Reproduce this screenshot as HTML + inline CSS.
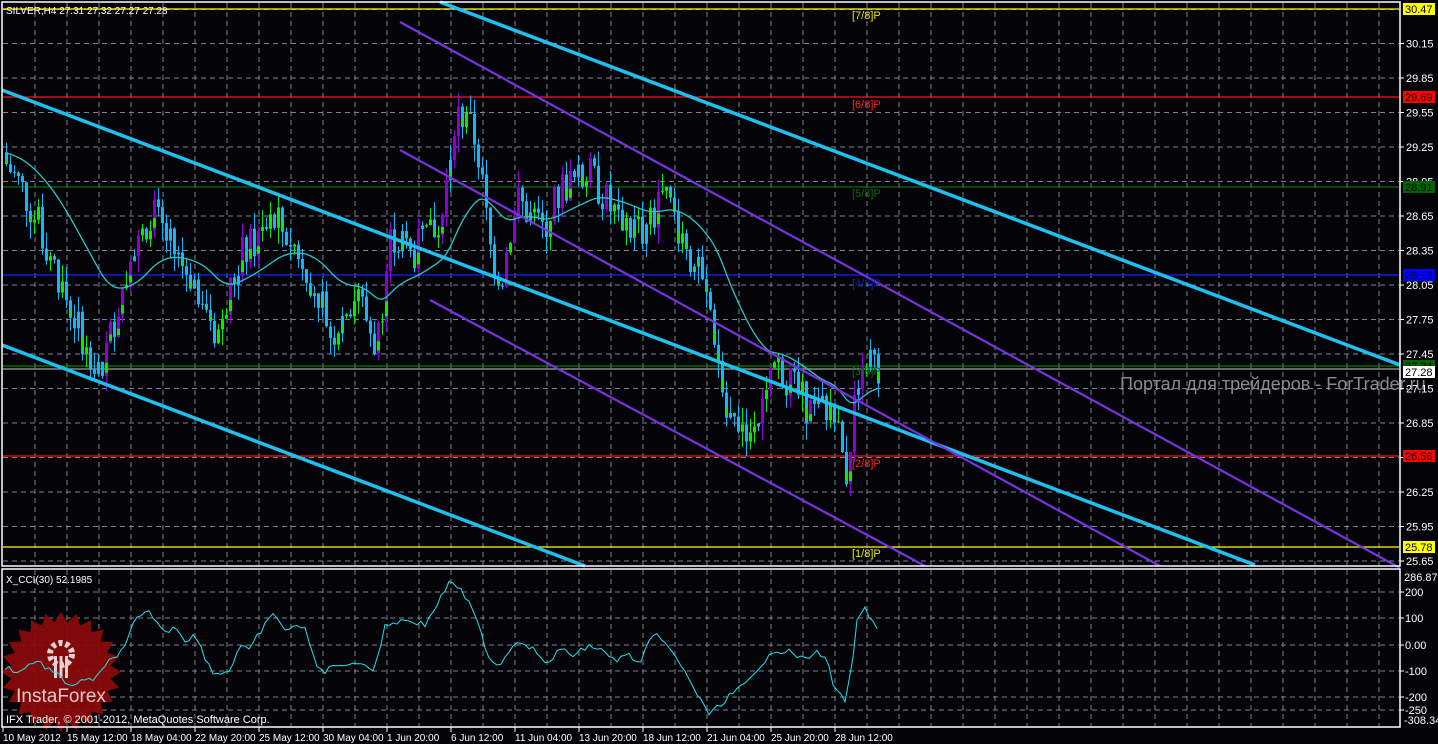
<!DOCTYPE html>
<html><head><meta charset="utf-8"><style>
html,body{margin:0;padding:0;background:#000;}
body{width:1438px;height:744px;overflow:hidden;position:relative;font-family:"Liberation Sans","DejaVu Sans",sans-serif;}
svg{position:absolute;left:0;top:0;}
text{font-family:"Liberation Sans","DejaVu Sans",sans-serif;}
</style></head><body>
<svg id="s" width="1438" height="744" viewBox="0 0 1438 744" xmlns="http://www.w3.org/2000/svg">
<rect width="1438" height="744" fill="#040408"/>
<g id="grid" stroke="#7a8590" stroke-width="1" stroke-dasharray="5,4"></g>
<g id="hl"></g>
<g id="candles"></g>
<polyline id="ma" fill="none" stroke="#28c8c8" stroke-width="1.3"/>
<g stroke="#1ec0f0" stroke-width="3.5" stroke-linecap="butt">
<line x1="440" y1="2" x2="1400" y2="365"/>
<line x1="2" y1="90" x2="1255" y2="565"/>
<line x1="2" y1="345" x2="585" y2="566"/>
</g>
<g stroke="#7a32e0" stroke-width="2.2">
<line x1="400" y1="22" x2="1400" y2="568"/>
<line x1="400" y1="150" x2="1160" y2="566"/>
<line x1="430" y1="300" x2="925" y2="566"/>
</g>
<g font-size="11">
<text x="852" y="19" fill="#e8e800">[7/8]P</text>
<text x="852" y="108" fill="#ff2020">[6/8]P</text>
<text x="852" y="197" fill="#0a6a0a">[5/8]P</text>
<text x="852" y="287" fill="#1020c0">[4/8]P</text>
<text x="852" y="375" fill="#0a6a0a">[3/8]P</text>
<text x="852" y="467" fill="#ff2020">[2/8]P</text>
<text x="852" y="557" fill="#e8e800">[1/8]P</text>
</g>
<text x="1120" y="390" font-size="18" fill="#8a8a8a">Портал для трейдеров - ForTrader.ru</text>
<text x="6" y="14" font-size="10" fill="#fff">SILVER,H4  27.31 27.32 27.27 27.28</text>
<g transform="translate(61,672)">
<polygon id="star" fill="#8c0a0a" opacity="0.92"/>
<g fill="#e8d0d0">
<circle cx="0" cy="-18" r="11" fill="none" stroke="#e8d0d0" stroke-width="6" stroke-dasharray="4,3"/>
<rect x="-7" y="-16" width="3" height="22"/><rect x="-1.5" y="-16" width="3" height="22"/><rect x="4" y="-16" width="3" height="22"/>
</g>
<text x="0" y="30" font-size="19" fill="#e8c8c8" text-anchor="middle">InstaForex</text>
</g>
<polyline id="cci" fill="none" stroke="#20e0f0" stroke-width="1"/>
<text x="6" y="583" font-size="10" fill="#fff">X_CCI(30) 52.1985</text>
<text x="6" y="723" font-size="11" fill="#fff">IFX Trader, © 2001-2012, MetaQuotes Software Corp.</text>
<g fill="none" stroke="#fff" stroke-width="1.5">
<rect x="2" y="2" width="1398" height="564"/>
<rect x="2" y="569" width="1398" height="158"/>
</g>
<g id="axis" font-size="11" fill="#fff"></g>
<g id="time" font-size="10" fill="#fff"></g>
</svg>
<script>
var NS="http://www.w3.org/2000/svg";
function el(p,t,a,txt){var e=document.createElementNS(NS,t);for(var k in a)e.setAttribute(k,a[k]);if(txt!=null)e.textContent=txt;document.getElementById(p).appendChild(e);return e;}
function Y(p){return 43+(30.15-p)*115;}
for(var x=35;x<1400;x+=32){el('grid','line',{x1:x,y1:3,x2:x,y2:565});el('grid','line',{x1:x,y1:570,x2:x,y2:726});}
var gy=[9.5];for(var k=0;k<16;k++)gy.push(43.5+34.5*k);
gy.forEach(function(y){if(y<565)el('grid','line',{x1:3,y1:y,x2:1399,y2:y});});
[592,618,645,671,697,710].forEach(function(y){el('grid','line',{x1:3,y1:y,x2:1399,y2:y});});
[[9,'#ffff00'],[97,'#ff1010'],[187,'#0a6a0a'],[275,'#1020ff'],[366,'#0a7a0a'],[369,'#a0a0a0'],[456,'#ff1010'],[547,'#ffff00']].forEach(function(a){el('hl','line',{x1:3,y1:a[0],x2:1399,y2:a[0],stroke:a[1],'stroke-width':1.2});});
var labs=['30.15','29.85','29.55','29.25','28.95','28.65','28.35','28.05','27.75','27.45','27.15','26.85','26.55','26.25','25.95','25.65'];
labs.forEach(function(l,i){var y=43.5+34.5*i;el('axis','line',{x1:1400,y1:y,x2:1404,y2:y,stroke:'#fff'});el('axis','text',{x:1406,y:y+4},l);});
[[9,'30.47','#ffff00','#000'],[97,'29.69','#ff0000','#000'],[187,'28.91','#006400','#000'],[275,'28.13','#0000ff','#000030'],[366,'27.34','#006400','#000'],[372,'27.28','#fff','#000'],[456,'26.56','#ff0000','#000'],[547,'25.78','#ffff00','#000']].forEach(function(a){el('axis','rect',{x:1403,y:a[0]-6,width:32,height:12,fill:a[2]});el('axis','text',{x:1405,y:a[0]+4,fill:a[3]},a[1]);});
[[592,'200'],[618,'100'],[645,'0.00'],[671,'-100'],[697,'-200'],[710,'-250']].forEach(function(a){el('axis','line',{x1:1400,y1:a[0],x2:1404,y2:a[0],stroke:'#fff'});el('axis','text',{x:1405,y:a[0]+4},a[1]);});
el('axis','text',{x:1404,y:581},'286.870');el('axis','text',{x:1404,y:724},'-308.345');
var tl=['10 May 2012','15 May 12:00','18 May 04:00','22 May 20:00','25 May 12:00','30 May 04:00','1 Jun 20:00','6 Jun 12:00','11 Jun 04:00','13 Jun 20:00','18 Jun 12:00','21 Jun 04:00','25 Jun 20:00','28 Jun 12:00'];
tl.forEach(function(t,i){var x=3+64*i;el('time','line',{x1:x,y1:727,x2:x,y2:732,stroke:'#fff'});el('time','text',{x:x,y:741},t);});
var P=[[5,29.1],[20,28.9],[45,28.4],[75,27.7],[100,27.3],[120,28.0],[150,28.7],[175,28.3],[200,28.0],[215,27.6],[240,28.3],[275,28.6],[300,28.3],[320,27.9],[330,27.6],[355,28.0],[375,27.5],[390,28.5],[410,28.3],[440,28.6],[455,29.6],[475,29.3],[490,28.3],[500,28.1],[515,28.8],[540,28.5],[560,28.9],[590,29.0],[610,28.7],[640,28.5],[665,28.8],[690,28.3],[710,27.8],[725,26.9],[750,26.8],[765,27.0],[775,27.4],[795,27.1],[815,26.9],[830,27.0],[845,26.4],[860,27.5],[870,27.4],[878,27.3]];
function interp(A,x){for(var i=0;i<A.length-1;i++){if(x<=A[i+1][0]){var t=(x-A[i][0])/(A[i+1][0]-A[i][0]);return A[i][1]+t*(A[i+1][1]-A[i][1]);}}return A[A.length-1][1];}
var seed=7;function rnd(){seed=(seed*9301+49297)%233280;return seed/233280;}
var prev=29.2,ema=29.2,mapts=[];
for(var x=5;x<=878;x+=4){
 var c=interp(P,x)+(rnd()-0.5)*0.34,o=prev;
 var hi=Math.max(o,c)+rnd()*0.15,lo=Math.min(o,c)-rnd()*0.15;
 var col=c<o?'#10b8f8':(c-o>0.18?'#8c00d8':(rnd()<0.6?'#00f000':'#10b8f8'));
 el('candles','line',{x1:x+1.5,y1:Y(hi),x2:x+1.5,y2:Y(lo),stroke:col,'stroke-width':1});
 var yt=Y(Math.max(o,c)),yb=Y(Math.min(o,c));
 el('candles','rect',{x:x,y:yt,width:3,height:Math.max(1,yb-yt),fill:col});
 if(rnd()<0.35)el('candles','rect',{x:x,y:yt+(yb-yt)*0.6,width:3,height:(yb-yt)*0.3,fill:'#00f000'});
 prev=c;ema=ema+(interp(P,x)-ema)*0.07;mapts.push(x+1.5+','+Y(ema).toFixed(1));
}
document.getElementById('ma').setAttribute('points',mapts.join(' '));
var C=[[5,667],[20,672],[35,660],[50,670],[70,685],[90,680],[100,675],[110,660],[125,648],[135,620],[150,612],[165,633],[175,625],[185,640],[195,635],[205,657],[215,675],[230,670],[240,645],[250,652],[255,640],[265,625],[275,613],[285,630],[295,628],[305,625],[315,665],[325,673],[335,662],[345,668],[355,660],[365,665],[375,670],[385,625],[395,622],[410,620],[425,625],[435,608],[445,590],[452,580],[460,590],[470,605],[480,630],[490,660],[500,665],[510,648],[520,640],[535,650],[545,665],[560,650],[575,655],[590,645],[600,650],[615,660],[630,655],[640,665],[650,640],[660,635],[670,650],[680,665],[690,680],[700,700],[710,715],[720,705],[730,695],[745,685],[760,670],[770,650],[790,652],[805,660],[815,652],[825,655],[835,690],[845,700],[852,670],[858,612],[865,610],[872,622],[878,630]];
var cp=[];for(var x=5;x<=878;x+=4){cp.push(x+','+(interp(C,x)+(rnd()-0.5)*6).toFixed(1));}
document.getElementById('cci').setAttribute('points',cp.join(' '));
var sp=[];for(var i=0;i<48;i++){var r=i%2?50:60,a=i*Math.PI/24;sp.push((r*Math.cos(a)).toFixed(1)+','+(r*Math.sin(a)).toFixed(1));}
document.getElementById('star').setAttribute('points',sp.join(' '));
</script>
</body></html>
